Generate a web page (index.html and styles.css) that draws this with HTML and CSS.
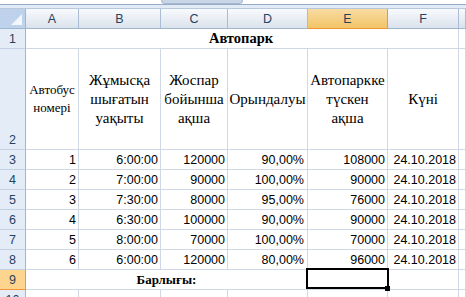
FILE: index.html
```html
<!DOCTYPE html>
<html>
<head>
<meta charset="utf-8">
<link rel="stylesheet" href="styles.css">
</head>
<body>
<div class="top">
  <div class="top-white"><div class="tab"></div></div>
  <div class="top-band"></div>
</div>
<div class="sheet">
  <div class="corner"></div>
  <div class="ch">A</div>
  <div class="ch">B</div>
  <div class="ch">C</div>
  <div class="ch">D</div>
  <div class="ch sel">E</div>
  <div class="ch">F</div>
  <div class="ch"></div>

  <div class="rh">1</div>
  <div class="c title span6">Автопарк</div>
  <div class="c"></div>

  <div class="rh">2</div>
  <div class="c hd small">Автобус<br>номері</div>
  <div class="c hd">Жұмысқа<br>шығатын<br>уақыты</div>
  <div class="c hd">Жоспар<br>бойынша<br>ақша</div>
  <div class="c hd">Орындалуы</div>
  <div class="c hd">Автопаркке<br>түскен<br>ақша</div>
  <div class="c hd">Күні</div>
  <div class="c"></div>

  <div class="rh">3</div>
  <div class="c num">1</div><div class="c num">6:00:00</div><div class="c num">120000</div><div class="c num pct">90,00%</div><div class="c num">108000</div><div class="c num">24.10.2018</div><div class="c"></div>
  <div class="rh">4</div>
  <div class="c num">2</div><div class="c num">7:00:00</div><div class="c num">90000</div><div class="c num pct">100,00%</div><div class="c num">90000</div><div class="c num">24.10.2018</div><div class="c"></div>
  <div class="rh">5</div>
  <div class="c num">3</div><div class="c num">7:30:00</div><div class="c num">80000</div><div class="c num pct">95,00%</div><div class="c num">76000</div><div class="c num">24.10.2018</div><div class="c"></div>
  <div class="rh">6</div>
  <div class="c num">4</div><div class="c num">6:30:00</div><div class="c num">100000</div><div class="c num pct">90,00%</div><div class="c num">90000</div><div class="c num">24.10.2018</div><div class="c"></div>
  <div class="rh">7</div>
  <div class="c num">5</div><div class="c num">8:00:00</div><div class="c num">70000</div><div class="c num pct">100,00%</div><div class="c num">70000</div><div class="c num">24.10.2018</div><div class="c"></div>
  <div class="rh">8</div>
  <div class="c num">6</div><div class="c num">6:00:00</div><div class="c num">120000</div><div class="c num pct">80,00%</div><div class="c num">96000</div><div class="c num">24.10.2018</div><div class="c"></div>

  <div class="rh rsel">9</div>
  <div class="c total span4">Барлығы:</div>
  <div class="c"></div><div class="c"></div><div class="c"></div>

  <div class="rh">10</div>
  <div class="c"></div><div class="c"></div><div class="c"></div><div class="c"></div><div class="c"></div><div class="c"></div><div class="c"></div>
</div>
<div class="selbox"><div class="handle"></div></div>
</body>
</html>
```

FILE: styles.css
```css
html, body {
  margin: 0;
  padding: 0;
  background: #ffffff;
}
body {
  width: 466px;
  height: 297px;
  overflow: hidden;
  position: relative;
  font-family: "Liberation Sans", Arial, sans-serif;
}
.top {
  display: flex;
  flex-direction: column;
}
.top-white {
  height: 4px;
  background: #ffffff;
  border-bottom: 1px solid #95abc8;
  padding-left: 161px;
  display: flex;
}
.tab {
  width: 82px;
  height: 4px;
  background: #c9d6e8;
  border: 1px solid #a7b9d1;
  border-top: none;
  border-radius: 0 0 7px 7px;
  box-sizing: border-box;
}
.top-band {
  height: 3px;
  background: #e3ebf6;
  border-bottom: 1px solid #b7c7dc;
}
.sheet {
  display: grid;
  grid-template-columns: 26px 53px 82px 67px 80px 80px 71px 1fr;
  grid-template-rows: 20px 20px 101px repeat(7, 20px) 20px;
}
.sheet > div {
  box-sizing: border-box;
}
.corner {
  background: #bfd2ec;
  border-right: 1px solid #9eb6ce;
  border-bottom: 1px solid #9eb6ce;
  position: relative;
}
.corner::after {
  content: "";
  position: absolute;
  right: 3px;
  bottom: 3px;
  width: 11px;
  height: 11px;
  background: linear-gradient(135deg, #e9eef6, #f7f9fc);
  clip-path: polygon(100% 0, 100% 100%, 0 100%);
}
.ch {
  background: linear-gradient(#f8fafd, #dbe2ec);
  border-right: 1px solid #a9bcd3;
  border-bottom: 1px solid #9eb6ce;
  color: #27415f;
  font-size: 12.5px;
  display: flex;
  align-items: center;
  justify-content: center;
  padding-top: 1px;
}
.ch.sel {
  background: linear-gradient(#f9dca3, #f2c466);
  border-right: 1px solid #f29536;
  border-bottom: 1px solid #f29536;
}
.rh {
  background: #e4ecf7;
  border-right: 1px solid #9eb6ce;
  border-bottom: 1px solid #c3d1e2;
  color: #27415f;
  font-size: 12.5px;
  line-height: 15px;
  display: flex;
  align-items: flex-end;
  justify-content: center;
  padding-bottom: 1px;
}
.rh.rsel {
  background: #fed58e;
  border-right: 1px solid #f29536;
  border-bottom: 1px solid #f29536;
}
.c {
  border-right: 1px solid #d0d7e5;
  border-bottom: 1px solid #d0d7e5;
  display: flex;
  align-items: flex-end;
  font-size: 12.5px;
  line-height: 15px;
  color: #000;
  padding: 0 2px 1px;
  white-space: nowrap;
}
.num {
  justify-content: flex-end;
}
.pct {
  padding-right: 3px;
}
.span6 {
  grid-column: span 6;
}
.span4 {
  grid-column: span 4;
}
.title {
  font-family: "Liberation Serif", "Times New Roman", serif;
  font-weight: bold;
  font-size: 14.5px;
  justify-content: center;
  padding-bottom: 2px;
  padding-left: 0;
}
.hd {
  font-family: "Liberation Serif", "Times New Roman", serif;
  font-size: 15px;
  line-height: 19px;
  align-items: center;
  justify-content: center;
  text-align: center;
  padding: 0;
}
.hd.small {
  font-size: 13px;
  line-height: 18px;
}
.total {
  font-family: "Liberation Serif", "Times New Roman", serif;
  font-weight: bold;
  font-size: 13px;
  justify-content: center;
  padding-bottom: 2px;
}
.selbox {
  position: absolute;
  left: 306px;
  top: 268px;
  width: 83px;
  height: 21px;
  border: 2px solid #000;
  box-sizing: border-box;
}
.handle {
  position: absolute;
  right: -3px;
  bottom: -4px;
  width: 5px;
  height: 5px;
  background: #000;
}
```
